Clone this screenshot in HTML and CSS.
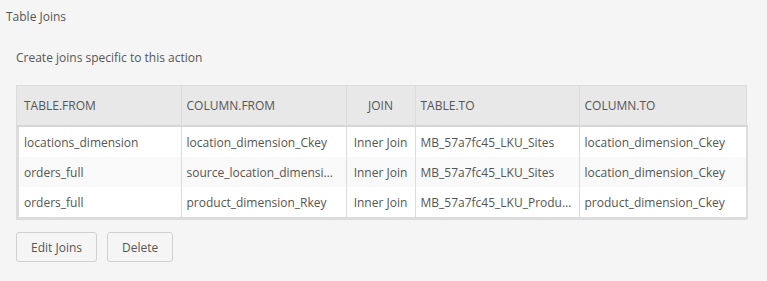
FILE: index.html
```html
<!DOCTYPE html>
<html>
<head>
<meta charset="utf-8">
<link rel="stylesheet" href="styles.css">
</head>
<body>
<div class="panel">
  <div class="title">Table Joins</div>
  <div class="content">
    <p class="desc">Create joins specific to this action</p>
    <div class="table-wrap">
      <table class="joins">
        <colgroup>
          <col class="c1"><col class="c2"><col class="c3"><col class="c4"><col class="c5">
        </colgroup>
        <thead>
          <tr><th>TABLE.FROM</th><th>COLUMN.FROM</th><th class="center">JOIN</th><th>TABLE.TO</th><th>COLUMN.TO</th></tr>
        </thead>
        <tbody>
          <tr><td>locations_dimension</td><td>location_dimension_Ckey</td><td class="center">Inner Join</td><td>MB_57a7fc45_LKU_Sites</td><td>location_dimension_Ckey</td></tr>
          <tr class="alt"><td>orders_full</td><td>source_location_dimension_Ckey</td><td class="center">Inner Join</td><td>MB_57a7fc45_LKU_Sites</td><td>location_dimension_Ckey</td></tr>
          <tr><td>orders_full</td><td>product_dimension_Rkey</td><td class="center">Inner Join</td><td>MB_57a7fc45_LKU_Products</td><td>product_dimension_Ckey</td></tr>
        </tbody>
      </table>
    </div>
    <div class="actions">
      <button class="btn">Edit Joins</button>
      <button class="btn">Delete</button>
    </div>
  </div>
</div>
</body>
</html>
```
FILE: styles.css
```css
html, body {
  margin: 0;
  padding: 0;
  background: #f5f5f5;
}
body {
  font-family: "Open Sans", "Liberation Sans", sans-serif;
  font-size: 12px;
  color: #555;
}
.panel {
  padding: 8px 0 0 6px;
}
.title {
  line-height: 17px;
  color: #555;
}
.content {
  padding: 24px 22px 0 10px;
}
.desc {
  margin: 0;
  line-height: 17px;
}
.table-wrap {
  margin-top: 19px;
  width: 729px;
  border: 1px solid #dcdcdc;
  background: #e8e8e8;
}
.joins {
  width: 100%;
  table-layout: fixed;
  border-collapse: collapse;
}
.c1 { width: 163px; }
.c2 { width: 165px; }
.c3 { width: 69px; }
.c4 { width: 164px; }
.c5 { width: 168px; }
.joins th {
  height: 39px;
  padding: 0 5px;
  text-align: left;
  font-weight: normal;
  color: #555;
  border-left: 1px solid #dcdcdc;
  border-bottom: 2px solid #d6d6d6;
}
.joins th:first-child { border-left: none; padding-left: 6px; }
.joins tbody tr { background: #fff; }
.joins tbody tr.alt { background: #f9f9f9; }
.joins td {
  height: 30px;
  padding: 0 6px 0 5px;
  white-space: nowrap;
  overflow: hidden;
  text-overflow: ellipsis;
  border-left: 1px solid #dcdcdc;
  color: #555;
}
.joins td:first-child { border-left: 2px solid #dcdcdc; }
.joins td:last-child { border-right: 2px solid #dcdcdc; }
.joins tbody tr:last-child td { border-bottom: 2px solid #dcdcdc; }
.joins .center { text-align: center; padding-right: 5px; }
.actions {
  display: flex;
  gap: 10px;
  margin-top: 12px;
}
.btn {
  font-family: inherit;
  font-size: 12px;
  color: #555;
  background: #f5f5f5;
  border: 1px solid #d0d0d0;
  border-radius: 3px;
  height: 30px;
  padding: 0 14px;
}
```
